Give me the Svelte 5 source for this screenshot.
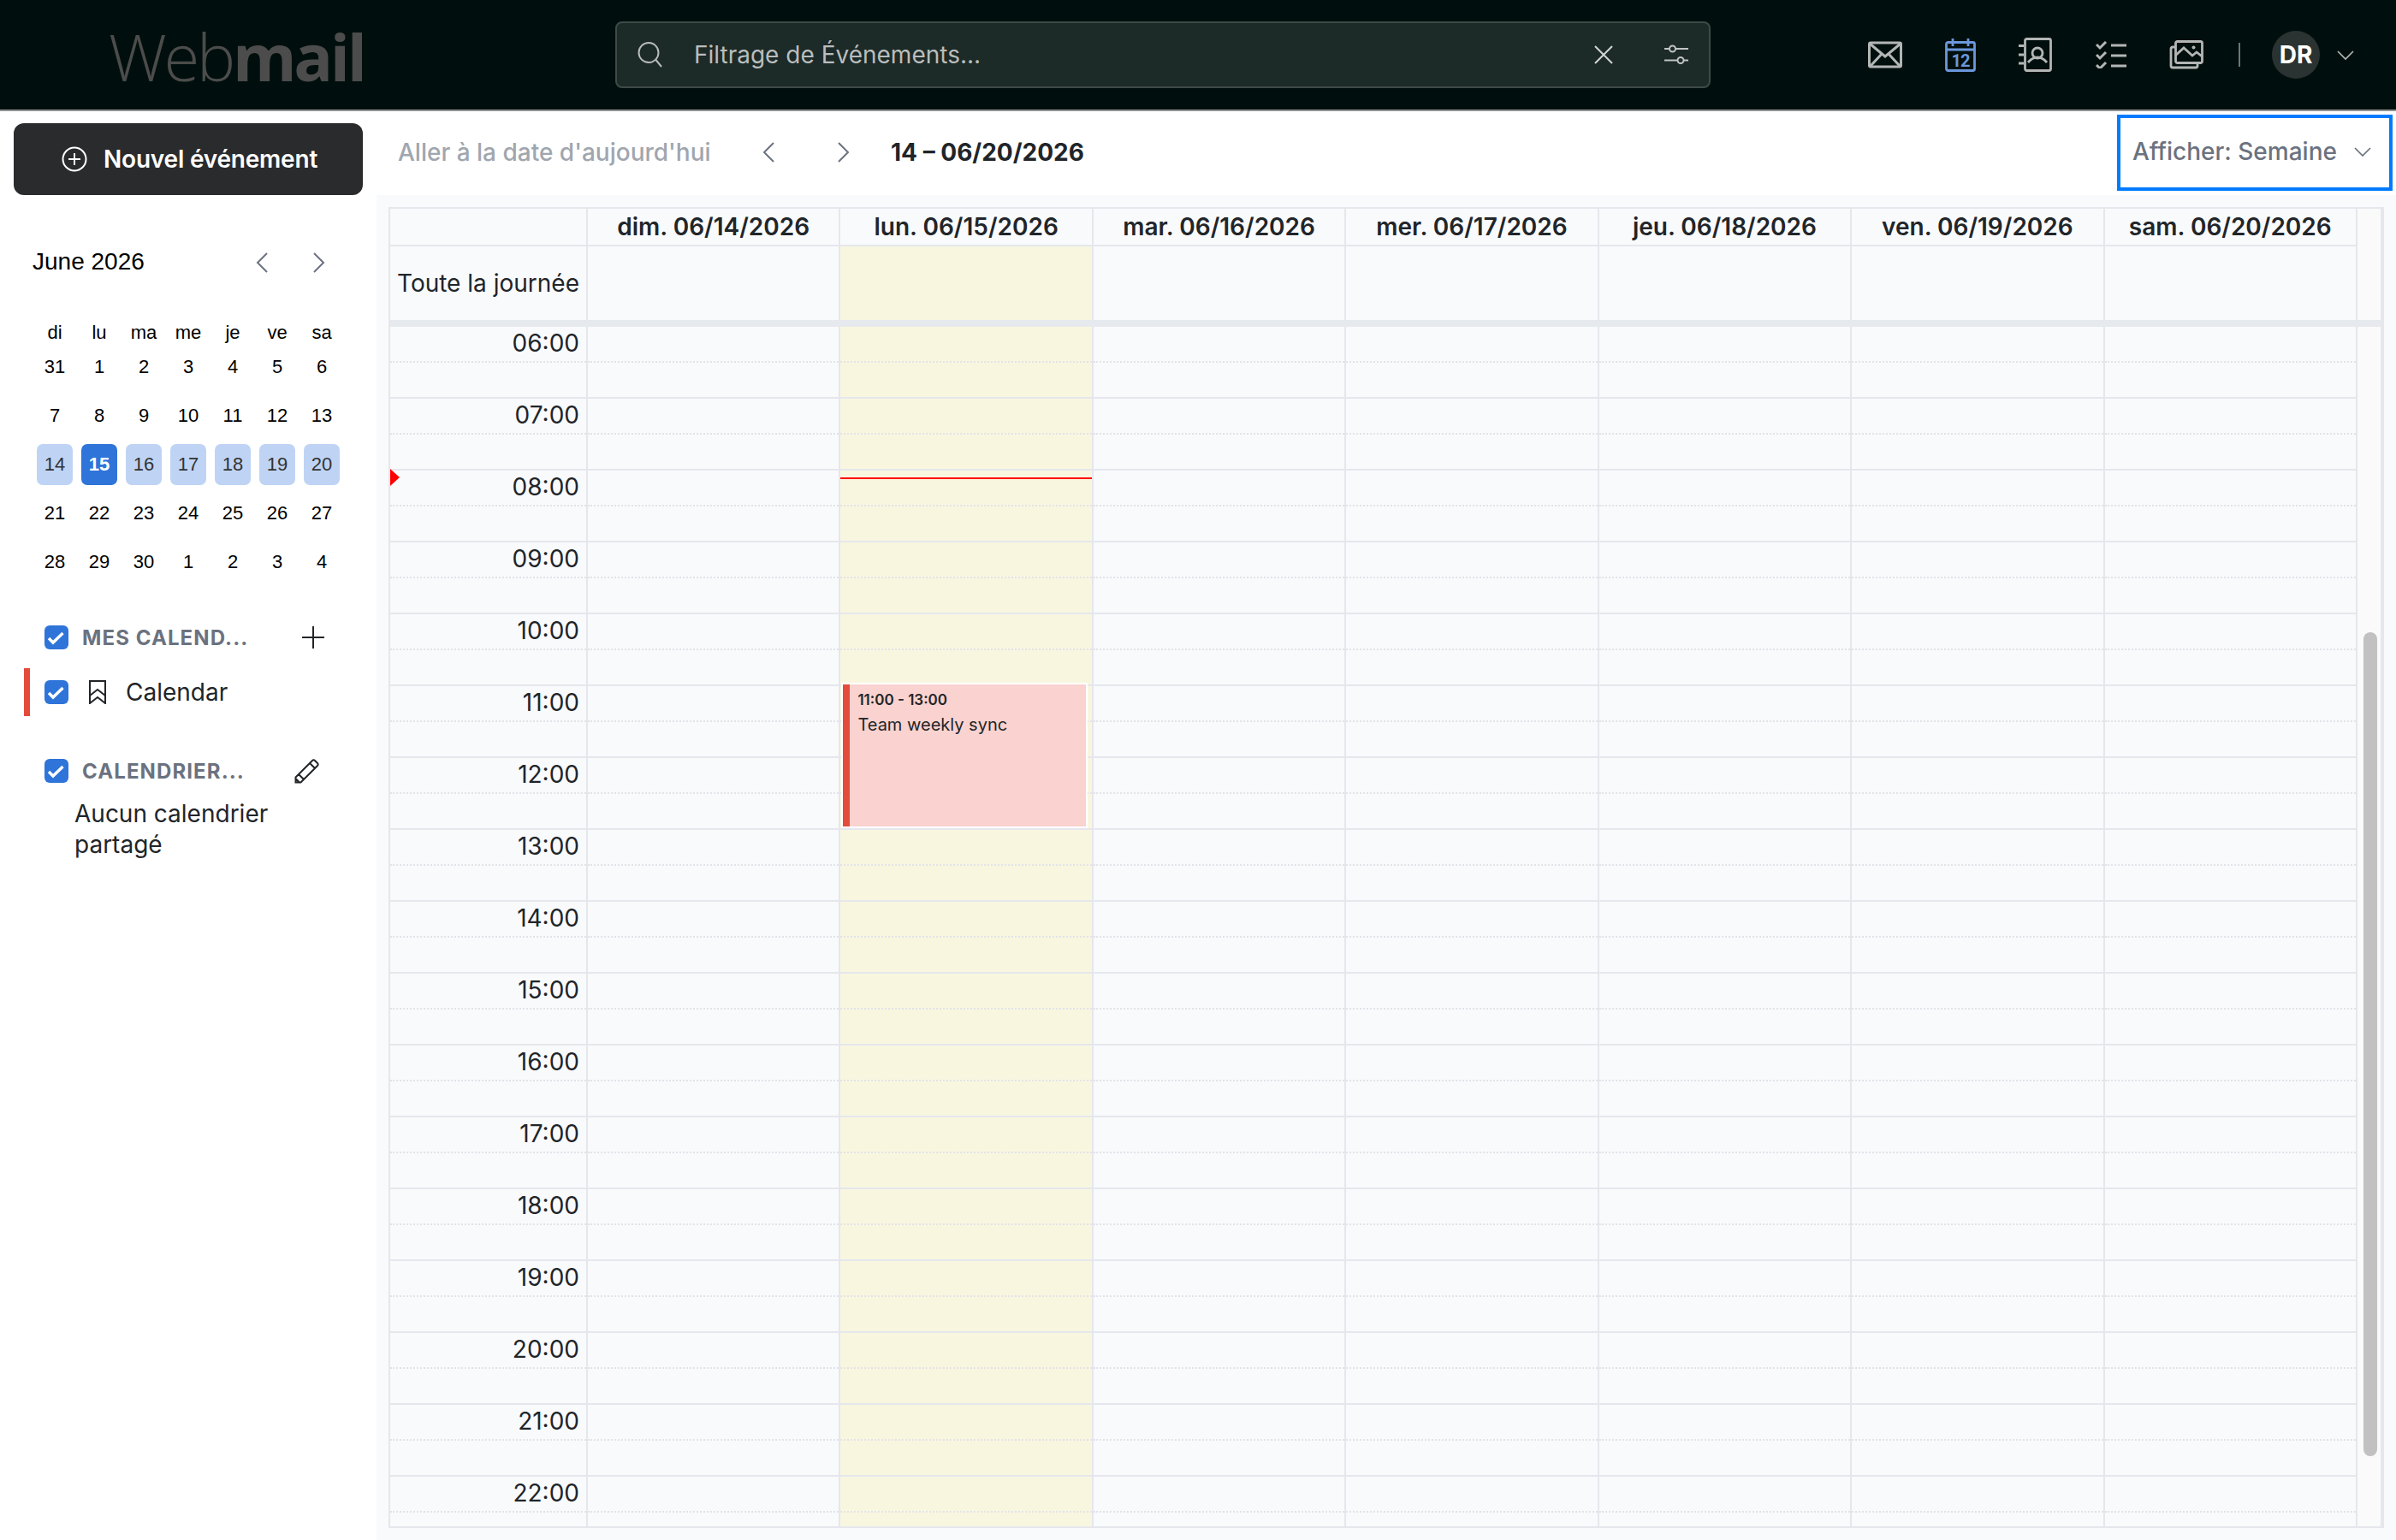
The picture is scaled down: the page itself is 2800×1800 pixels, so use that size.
<script>
  const weekdays = ["di", "lu", "ma", "me", "je", "ve", "sa"];
  const miniDays = [31, 1, 2, 3, 4, 5, 6, 7, 8, 9, 10, 11, 12, 13, 14, 15, 16, 17, 18, 19, 20, 21, 22, 23, 24, 25, 26, 27, 28, 29, 30, 1, 2, 3, 4];
  const dayHeads = ["dim. 06/14/2026", "lun. 06/15/2026", "mar. 06/16/2026", "mer. 06/17/2026", "jeu. 06/18/2026", "ven. 06/19/2026", "sam. 06/20/2026"];
  const hours = ["06:00", "07:00", "08:00", "09:00", "10:00", "11:00", "12:00", "13:00", "14:00", "15:00", "16:00", "17:00", "18:00", "19:00", "20:00", "21:00", "22:00"];
  const todayCol = 1;
</script>

{#snippet chevron(dir)}
  <svg class="chev" viewBox="0 0 14 24" width="14" height="24" fill="none" stroke="currentColor" stroke-width="2">
    {#if dir === "left"}
      <path d="M13 1 2 12l11 11" />
    {:else}
      <path d="M1 1l11 11L1 23" />
    {/if}
  </svg>
{/snippet}

{#snippet check()}
  <span class="check">
    <svg viewBox="0 0 28 28" width="28" height="28" fill="none" stroke="#fff" stroke-width="3.4">
      <path d="M5 15l5 5L21.500 9" />
    </svg>
  </span>
{/snippet}

<div class="page">
  <header class="topbar">
    <div class="logo"><span class="web">Web</span><span class="mail">mail</span></div>

    <div class="search">
      <svg class="search-icon" viewBox="0 0 30 30" width="30" height="30" fill="none" stroke="#b7bbba" stroke-width="2">
        <circle cx="13" cy="12.500" r="11.500" />
        <path d="M21.500 21 28 29" />
      </svg>
      <span class="placeholder">Filtrage de Événements...</span>
      <svg class="clear" viewBox="0 0 22 22" width="22" height="22" fill="none" stroke="#d2d5d4" stroke-width="2">
        <path d="M1 1l20 20M21 1 1 21" />
      </svg>
      <svg viewBox="0 0 28 24" width="28" height="24" fill="none" stroke="#c0c4c3" stroke-width="2">
        <path d="M0 5h6M13 5h15M0 18.500h15.500M22.500 18.500H28" />
        <circle cx="9.500" cy="5" r="3.500" />
        <circle cx="19" cy="18.500" r="3.500" />
      </svg>
    </div>

    <nav class="apps">
      <svg viewBox="0 0 40 32" width="40" height="32" fill="none" stroke="#b3b6b5" stroke-width="3">
        <rect x="1.500" y="2" width="37" height="28" rx="1.500" />
        <path d="M2 3l18 15L38 3M3 29l13-14M37 29 24 15" />
      </svg>
      <svg viewBox="0 0 36 39" width="36" height="39" fill="none" stroke="#6b97dc" stroke-width="2.800">
        <rect x="1.500" y="4.500" width="33" height="33" rx="2" />
        <path d="M2 13h32M9 0v9M27 0v9" />
        <text x="18" y="33" text-anchor="middle" class="cal-num">12</text>
      </svg>
      <svg viewBox="0 0 40 40" width="40" height="40" fill="none" stroke="#b3b6b5" stroke-width="2.800">
        <rect x="7.500" y="1.500" width="30" height="37" rx="2" />
        <path d="M0 9.500h6M0 20h6M0 30h6" />
        <circle cx="22" cy="18" r="6" />
        <path d="M11 29q5-6 11-6t11 6" />
      </svg>
      <svg viewBox="0 0 36 32" width="36" height="32" fill="none" stroke="#b3b6b5" stroke-width="3">
        <path d="M1 4l4 4 7-7M1 16l4 4 7-7M1 28l4 4 7-7" />
        <path d="M18 5h18M18 17h18M18 29h18" />
      </svg>
      <svg viewBox="0 0 40 34" width="40" height="34" fill="none" stroke="#b3b6b5" stroke-width="2.800">
        <rect x="7.500" y="1.500" width="31" height="25" rx="2" />
        <path d="M7 8H4a2 2 0 0 0-2 2v20a2 2 0 0 0 2 2h27a2 2 0 0 0 2-2v-3" />
        <path d="M7 18l10-9 10 9 5-4 7 5.500" />
        <circle cx="28.500" cy="8.500" r="2" fill="#b3b6b5" stroke="none" />
      </svg>
      <span class="divider"></span>
      <span class="avatar">DR</span>
      <svg class="avatar-chev" viewBox="0 0 20 11" width="20" height="11" fill="none" stroke="#b3b6b5" stroke-width="1.700">
        <path d="M1 1l9 9 9-9" />
      </svg>
    </nav>
  </header>

  <div class="layout">
    <aside class="sidebar">
      <button class="new-event">
        <svg viewBox="0 0 30 30" width="30" height="30" fill="none" stroke="#fff" stroke-width="2">
          <circle cx="15" cy="15" r="13.500" />
          <path d="M15 8v14M8 15h14" />
        </svg>
        Nouvel événement
      </button>

      <div class="month-head">
        <span class="month">June 2026</span>
        <span class="month-nav">
          {@render chevron("left")}
          {@render chevron("right")}
        </span>
      </div>

      <div class="weekdays">
        {#each weekdays as d}
          <span>{d}</span>
        {/each}
      </div>
      <div class="mini-grid">
        {#each miniDays as d, i}
          <span class="mini-day" class:week={i >= 14 && i <= 20} class:today={i === 15}>{d}</span>
        {/each}
      </div>

      <div class="group-head first">
        {@render check()}
        <span class="group-title">MES CALEND...</span>
        <svg class="group-action plus" viewBox="0 0 28 28" width="28" height="28" fill="none" stroke="#212529" stroke-width="2">
          <path d="M14 1v26M1 14h26" />
        </svg>
      </div>
      <div class="calendar-item">
        {@render check()}
        <svg class="bookmark" viewBox="0 0 20 28" width="20" height="28" fill="none" stroke="#212529" stroke-width="2">
          <path d="M1 1h18v26l-9-7-9 7zM1 18l9-7 9 7" />
        </svg>
        <span>Calendar</span>
      </div>

      <div class="group-head second">
        {@render check()}
        <span class="group-title">CALENDRIER...</span>
        <svg class="group-action pencil" viewBox="0 0 30 30" width="30" height="30" fill="none" stroke="#212529" stroke-width="2">
          <path d="M1.500 22.500 21 3a2 2 0 0 1 3 0l3 3a2 2 0 0 1 0 3L7.500 28.500H1.500zM18 6l6 6M5 19l6 6M1.500 24l4.500 4.500" />
        </svg>
      </div>
      <p class="empty">Aucun calendrier partagé</p>
    </aside>

    <main class="main">
      <div class="toolbar">
        <span class="goto">Aller à la date d'aujourd'hui</span>
        <span class="week-nav">
          {@render chevron("left")}
          {@render chevron("right")}
        </span>
        <strong class="range">14 – 06/20/2026</strong>
        <div class="view-select">
          Afficher: Semaine
          <svg viewBox="0 0 20 11" width="20" height="11" fill="none" stroke="#6b7280" stroke-width="1.700">
            <path d="M1 1l9 9 9-9" />
          </svg>
        </div>
      </div>

      <div class="calendar-wrap">
        <div class="calendar">
          <div class="head-row">
            <div class="cell corner"></div>
            {#each dayHeads as h}
              <div class="cell day-head">{h}</div>
            {/each}
            <div class="gutter"></div>
          </div>
          <div class="allday-row">
            <div class="cell allday-label">Toute la journée</div>
            {#each dayHeads as _, i}
              <div class="cell" class:today-col={i === todayCol}></div>
            {/each}
            <div class="gutter"></div>
          </div>
          <div class="bar"></div>

          <div class="body">
            <div class="times">
              {#each hours as t}
                <div class="slot hour-label">{t}</div>
                <div class="slot half"></div>
              {/each}
              <span class="now-arrow"></span>
            </div>
            {#each dayHeads as _, i}
              <div class="col" class:today-col={i === todayCol}>
                {#each hours as t}
                  <div class="slot dotted"></div>
                  <div class="slot half"></div>
                {/each}
                {#if i === todayCol}
                  <span class="now-line"></span>
                  <div class="event">
                    <div class="event-inner">
                      <div class="event-time">11:00 - 13:00</div>
                      <div class="event-title">Team weekly sync</div>
                    </div>
                  </div>
                {/if}
              </div>
            {/each}
            <div class="scroll">
              <div class="thumb"></div>
            </div>
          </div>
        </div>
      </div>
    </main>
  </div>
</div>

<style>
  :global(body) {
    margin: 0;
    background: #fff;
  }

  .page {
    width: 2800px;
    height: 1800px;
    display: flex;
    flex-direction: column;
    overflow: hidden;
    font-family: Inter, "Liberation Sans", sans-serif;
    font-size: 28px;
    color: #212529;
  }

  /* top bar */
  .topbar {
    height: 128px;
    flex: none;
    box-sizing: content-box;
    display: flex;
    align-items: center;
    background: #000f0d;
    border-bottom: 2px solid #8f9391;
  }

  .logo {
    width: 719px;
    padding-left: 127px;
    box-sizing: border-box;
    font-family: "Open Sans", sans-serif;
    font-size: 76px;
    line-height: 1;
    color: #4b4c4b;
    letter-spacing: -3.300px;
    white-space: nowrap;
    flex: none;
    margin-top: 4px;
  }

  .web {
    font-weight: 300;
  }

  .mail {
    font-weight: 700;
  }

  .search {
    width: 1280px;
    height: 78px;
    box-sizing: border-box;
    flex: none;
    display: flex;
    align-items: center;
    padding: 0 24px;
    background: #1c2a28;
    border: 2px solid #3e4a48;
    border-radius: 8px;
    color: #b9bdbc;
  }

  .search-icon {
    margin-right: 36px;
  }

  .placeholder {
    flex: 1;
  }

  .clear {
    margin-right: 60px;
  }

  .apps {
    display: flex;
    align-items: center;
    margin-left: 184px;
  }

  .apps > svg {
    margin-right: 50px;
    flex: none;
  }

  .cal-num {
    font-family: "Roboto", sans-serif;
    font-size: 20px;
    font-weight: 700;
    letter-spacing: -1px;
    fill: #6b97dc;
    stroke: none;
  }

  .divider {
    width: 2px;
    height: 28px;
    background: #6f7472;
    margin-right: 37px;
    margin-left: -9px;
  }

  .avatar {
    width: 56px;
    height: 56px;
    border-radius: 50%;
    background: #2a3331;
    color: #fff;
    font-weight: 700;
    display: flex;
    align-items: center;
    justify-content: center;
    margin-right: 20px;
  }

  .apps > .avatar-chev {
    margin-right: 0;
  }

  /* page body */
  .layout {
    flex: 1;
    display: flex;
    min-height: 0;
  }

  .sidebar {
    width: 440px;
    flex: none;
    box-sizing: border-box;
    padding: 14px 0 0;
    background: #fff;
    position: relative;
  }

  .new-event {
    width: 408px;
    height: 84px;
    margin-left: 16px;
    display: flex;
    align-items: center;
    gap: 19px;
    padding: 0 0 0 56px;
    box-sizing: border-box;
    background: #2a2b2d;
    color: #fff;
    border: none;
    border-radius: 12px;
    font: 600 28px Inter, sans-serif;
    letter-spacing: -0.200px;
  }

  .month-head {
    display: flex;
    align-items: center;
    justify-content: space-between;
    margin: 62px 60px 0 38px;
    height: 32px;
    font-family: "Liberation Sans", sans-serif;
    color: #000;
  }

  .month-nav {
    display: flex;
    gap: 53px;
    color: #6b7280;
    margin-top: 2px;
  }

  .chev {
    display: block;
  }

  .weekdays,
  .mini-grid {
    display: grid;
    grid-template-columns: repeat(7, 42px);
    column-gap: 10px;
    margin-left: 43px;
    font-family: "Liberation Sans", sans-serif;
    font-size: 22px;
    color: #000;
    text-align: center;
  }

  .weekdays {
    margin-top: 55px;
    height: 24px;
    line-height: 24px;
  }

  .mini-grid {
    margin-top: 4px;
    grid-auto-rows: 48px;
    row-gap: 9px;
  }

  .mini-day {
    display: flex;
    align-items: center;
    justify-content: center;
    border-radius: 7px;
  }

  .mini-day.week {
    background: #bfd4f4;
    color: #333;
  }

  .mini-day.today {
    background: #2f74d9;
    color: #fff;
    font-weight: 700;
  }

  .group-head {
    display: flex;
    align-items: center;
    height: 28px;
    padding-left: 52px;
  }

  .group-head.first {
    margin-top: 50px;
  }

  .group-head.second {
    margin-top: 50px;
  }

  .check {
    width: 28px;
    height: 28px;
    flex: none;
    border-radius: 6px;
    background: #2f74d9;
    display: block;
  }

  .check svg {
    display: block;
  }

  .group-title {
    width: 198px;
    margin-left: 16px;
    font-size: 24px;
    font-weight: 700;
    letter-spacing: 1.100px;
    color: #6b7280;
    white-space: nowrap;
  }

  .group-action.plus {
    margin-left: 58px;
  }

  .group-action.pencil {
    margin-left: 50px;
  }

  .calendar-item {
    display: flex;
    align-items: center;
    height: 56px;
    margin: 22px 0 0 28px;
    padding-left: 17px;
    border-left: 7px solid #e34b3a;
  }

  .bookmark {
    margin: 0 23px 0 24px;
  }

  .empty {
    margin: 18px 0 0 87px;
    width: 280px;
    line-height: 36px;
  }

  /* main */
  .main {
    flex: 1;
    min-width: 0;
    display: flex;
    flex-direction: column;
  }

  .toolbar {
    height: 98px;
    flex: none;
    box-sizing: border-box;
    display: flex;
    align-items: center;
    padding: 0 0 3px 25px;
    background: #fff;
    position: relative;
  }

  .goto {
    color: #a0a6ae;
    font-weight: 500;
    width: 426px;
    flex: none;
  }

  .week-nav {
    display: flex;
    gap: 74px;
    color: #6b7280;
    width: 151px;
    flex: none;
  }

  .range {
    font-weight: 700;
    flex: 1;
    margin-left: -1px;
  }

  .view-select {
    width: 322px;
    height: 89px;
    box-sizing: border-box;
    margin-right: 4px;
    padding: 0 21px 3px 14px;
    display: flex;
    align-items: center;
    justify-content: space-between;
    border: 4px solid #007bff;
    color: #6b7280;
    font-weight: 500;
    flex: none;
    align-self: flex-start;
    margin-top: 4px;
  }

  .calendar-wrap {
    flex: 1;
    min-height: 0;
    box-sizing: border-box;
    padding: 14px;
    background: #f9fafc;
  }

  .calendar {
    height: 100%;
    box-sizing: border-box;
    display: flex;
    flex-direction: column;
    border: 2px solid #e5e7ed;
    border-right-width: 4px;
    overflow: hidden;
  }

  .head-row,
  .allday-row,
  .body {
    display: grid;
    grid-template-columns: 231px repeat(7, 1fr) 27px;
    flex: none;
  }

  .head-row {
    height: 44px;
  }

  .allday-row {
    height: 86px;
  }

  .cell {
    border-right: 2px solid #e5e7ed;
    box-sizing: border-box;
  }

  .head-row .cell {
    border-bottom: 2px solid #e5e7ed;
  }

  .day-head {
    display: flex;
    align-items: center;
    justify-content: center;
    font-weight: 600;
  }

  .allday-label {
    display: flex;
    align-items: center;
    justify-content: flex-end;
    padding-right: 8px;
    white-space: nowrap;
  }

  .today-col {
    background: #f9f6e0;
  }

  .gutter {
    background: #fafafa;
  }

  .bar {
    height: 8px;
    flex: none;
    background: #e6e9ed;
  }

  .body {
    flex: 1;
    min-height: 0;
    overflow: hidden;
    position: relative;
  }

  .times,
  .col {
    position: relative;
    border-right: 2px solid #e5e7ed;
    box-sizing: border-box;
    min-width: 0;
  }

  .slot {
    height: 42px;
    box-sizing: border-box;
    border-bottom: 2px dotted #e1e3e8;
  }

  .half {
    border-bottom: 2px solid #e5e7ed;
  }

  .hour-label {
    text-align: right;
    padding: 0 8px 0 0;
    line-height: 38px;
  }

  .now-arrow {
    position: absolute;
    left: 0;
    top: 166px;
    width: 0;
    height: 0;
    border-left: 11px solid #f00;
    border-top: 10px solid transparent;
    border-bottom: 10px solid transparent;
  }

  .now-line {
    position: absolute;
    left: 0;
    right: 0;
    top: 176px;
    height: 2px;
    background: #f00;
  }

  .event {
    position: absolute;
    left: 1px;
    top: 416px;
    width: 288px;
    height: 170px;
    box-sizing: border-box;
    border: 2px solid #fff;
  }

  .event-inner {
    height: 100%;
    box-sizing: border-box;
    padding: 6px 0 0 9px;
    background: #fad2cf;
    border-left: 8px solid #e34b3a;
  }

  .event-time {
    font-size: 17px;
    font-weight: 600;
    line-height: 24px;
  }

  .event-title {
    font-size: 20px;
    line-height: 26px;
    margin-top: 4px;
  }

  .scroll {
    background: #fafafa;
    position: relative;
  }

  .thumb {
    position: absolute;
    left: 7px;
    top: 357px;
    width: 16px;
    height: 963px;
    border-radius: 8px;
    background: #c1c1c1;
  }
</style>
